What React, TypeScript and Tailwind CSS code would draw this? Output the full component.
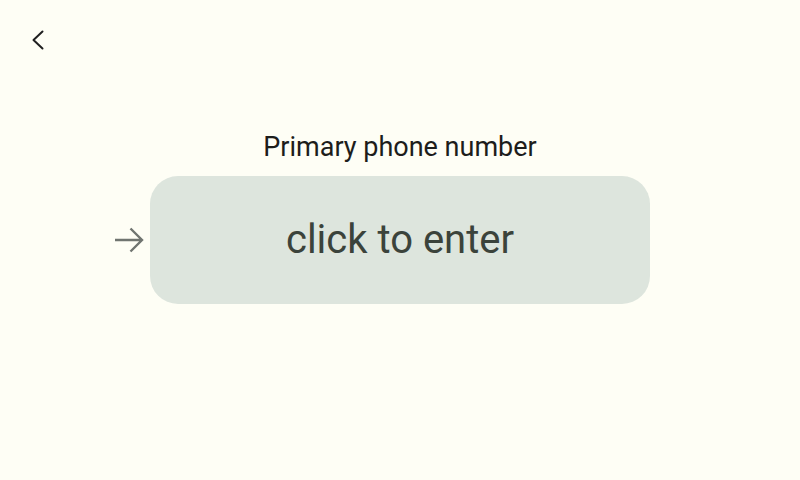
import React from "react";

export default function App() {
  return (
    <div className="w-[800px] h-[480px] bg-[#fefef5] flex flex-col" style={{ fontFamily: "Roboto, sans-serif" }}>
      <div className="h-[80px] pl-[26px] pt-[24px]">
        <svg width="24" height="32" viewBox="0 0 24 32">
          <path d="M16.5 7.5 L7.5 16 L16.5 24.5" fill="none" stroke="#1f1f1f" strokeWidth="2" strokeLinecap="round" strokeLinejoin="round" />
        </svg>
      </div>
      <div className="flex flex-col items-center">
        <div className="mt-[50px] text-[27px] leading-[34px] text-[#1d1d1b]">Primary phone number</div>
        <div className="mt-[12px] flex items-center">
          <svg className="mr-[6px] -ml-[36px]" width="30" height="28" viewBox="0 0 30 28">
            <path d="M1 14 H28 M16.5 2.5 L28 14 L16.5 25.5" fill="none" stroke="#707570" strokeWidth="2.4" strokeLinejoin="miter" />
          </svg>
          <div className="w-[500px] h-[128px] rounded-[28px] bg-[#dde5dd] flex items-center justify-center text-[40px] text-[#3b433b]">
            click to enter
          </div>
        </div>
      </div>
    </div>
  );
}
